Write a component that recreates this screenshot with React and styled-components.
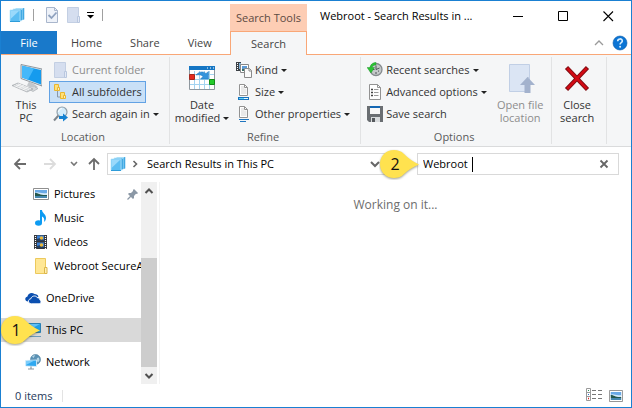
import React, { useState } from "react";
import styled, { createGlobalStyle } from "styled-components";

const GlobalStyle = createGlobalStyle`
  * {
    box-sizing: border-box;
  }
  body {
    margin: 0;
    background: #fff;
    color: #000;
    font-family: "Open Sans", "Noto Sans", sans-serif;
    font-size: 11px;
    line-height: 16px;
  }
  button,
  input {
    font: inherit;
    color: inherit;
    background: none;
    border: none;
    padding: 0;
    margin: 0;
  }
  svg {
    display: block;
    flex: none;
  }
`;

const Window = styled.div`
  display: flex;
  flex-direction: column;
  min-height: 100vh;
  border: 1px solid #1a80d2;
`;

/* title bar and tabs */
const Header = styled.header`
  display: grid;
  grid-template-columns: 229px 77px 1fr;
  grid-template-rows: 30px 24px;
`;
const QuickAccess = styled.div`
  display: flex;
  align-items: center;
  gap: 8px;
  padding: 0 0 2px 8px;
`;
const IconButton = styled.button`
  display: flex;
  align-items: center;
  justify-content: center;
  height: 100%;
  width: ${(props) => props.$width}px;
`;
const Separator = styled.span`
  width: 1px;
  height: 12px;
  background: ${(props) => props.$color || "#a0a0a0"};
`;
const ToolsLabel = styled.div`
  display: flex;
  align-items: center;
  justify-content: center;
  margin-top: 3px;
  background: #fdcdb4;
  color: #5c4a42;
`;
const TitleArea = styled.div`
  display: flex;
  min-width: 0;
`;
const Title = styled.h1`
  flex: 1;
  min-width: 0;
  margin: 0;
  padding: 0 0 0 13px;
  font-size: 11px;
  font-weight: 400;
  line-height: 30px;
  white-space: nowrap;
`;
const TabRow = styled.nav`
  display: flex;
  border-bottom: 1px solid #f9a777;
`;
const Tab = styled.button`
  padding: 0 14px;
  color: #444;
`;
const FileTab = styled(Tab)`
  width: 56px;
  background: #1979ca;
  color: #fff;
`;
const ActiveTab = styled(Tab)`
  border: 1px solid #f9a777;
  border-bottom: none;
  background: #f5f6f7;
`;
const TabEnd = styled.div`
  display: flex;
  justify-content: flex-end;
  border-bottom: 1px solid #f9a777;
  padding-right: 3px;
`;

/* ribbon */
const Ribbon = styled.div`
  display: flex;
  padding: 2px 0;
  background: #f5f6f7;
  border-bottom: 1px solid #dadbdc;
`;
const Group = styled.section`
  display: flex;
  flex-direction: column;
  min-width: ${(props) => props.$width}px;
  padding: 2px 6px 0 2px;
  border-right: 1px solid #e2e3e4;
`;
const GroupBody = styled.div`
  display: flex;
  height: 66px;
`;
const GroupLabel = styled.h2`
  margin: 5px 0 0;
  font-size: 11px;
  font-weight: 400;
  line-height: 14px;
  min-height: 14px;
  text-align: center;
  color: #5a5a5a;
`;
const BigButton = styled.button`
  display: flex;
  flex-direction: column;
  align-items: center;
  gap: 3px;
  width: ${(props) => props.$width}px;
  padding-top: 4px;
  line-height: 13px;
  white-space: nowrap;
  color: ${(props) => (props.disabled ? "#8d8d8d" : "#333")};
`;
const Column = styled.div`
  display: flex;
  flex: 1;
  flex-direction: column;
  align-items: flex-start;
`;
const SmallButton = styled.button`
  display: flex;
  align-items: center;
  gap: 3px;
  height: 22px;
  padding: 0 3px;
  white-space: nowrap;
  border: 1px solid ${(props) => (props.$active ? "#62a2e4" : "transparent")};
  background: ${(props) => (props.$active ? "#c9e0f7" : "none")};
  color: ${(props) => (props.disabled ? "#8d8d8d" : "#333")};
`;
const Caret = styled.span`
  display: inline-block;
  flex: none;
  margin-left: ${(props) => (props.$inline ? 3 : 0)}px;
  vertical-align: 2px;
  border: 3px solid transparent;
  border-top-color: #222;
  border-bottom: none;
`;

/* address bar */
const NavBar = styled.div`
  display: flex;
  align-items: center;
  padding: 6px 12px 7px 4px;
`;
const AddressBox = styled.div`
  display: flex;
  align-items: center;
  flex: 281 1 281px;
  height: 22px;
  margin: 0 29px 0 2px;
  padding: 0 4px 0 2px;
  border: 1px solid #d9d9d9;
`;
const Crumb = styled.button`
  flex: 1;
  padding-left: 4px;
  text-align: left;
  white-space: nowrap;
`;
const SearchBox = styled.div`
  position: relative;
  display: flex;
  align-items: center;
  flex: 202 1 202px;
  height: 22px;
  padding: 0 6px 0 5px;
  border: 1px solid #d9d9d9;
`;
const SearchInput = styled.input`
  field-sizing: content;
  min-width: 4px;
  outline: none;
  caret-color: transparent;
`;
const TextCursor = styled.span`
  width: 1px;
  height: 15px;
  margin: 0 auto 0 1px;
  background: #000;
`;

/* body */
const Body = styled.div`
  display: flex;
  flex: 1;
`;
const Tree = styled.ul`
  flex: none;
  width: 140px;
  margin: 0;
  padding: 0;
  list-style: none;
`;
const TreeItem = styled.li`
  position: relative;
  margin-top: ${(props) => (props.$root ? 8 : 0)}px;
  background: ${(props) => (props.$selected ? "#d9d9d9" : "none")};
`;
const TreeLink = styled.a`
  display: flex;
  align-items: center;
  gap: 5px;
  height: 24px;
  padding: 0 2px 0 ${(props) => (props.$root ? 24 : 32)}px;
  overflow: hidden;
  white-space: nowrap;
  color: #000;
  text-decoration: none;

  svg:last-child:not(:first-child) {
    margin-left: auto;
  }
`;
const Scrollbar = styled.div`
  display: flex;
  flex-direction: column;
  width: 16px;
  background: #f0f0f0;
`;
const ScrollArrow = styled.button`
  display: flex;
  align-items: center;
  justify-content: center;
  height: 17px;
`;
const Track = styled.div`
  display: flex;
  flex: 1;
  flex-direction: column;
  justify-content: flex-end;
`;
const Thumb = styled.div`
  height: 65%;
  background: #cdcdcd;
`;
const Results = styled.main`
  flex: 1;
  margin-left: 2px;
  padding-top: 15px;
  border-left: 1px solid #f3f3f3;
  text-align: center;
  font-size: 12px;
  color: #6d6d6d;
`;

const StatusBar = styled.footer`
  display: flex;
  align-items: center;
  height: 23px;
  padding: 0 7px 0 14px;
  color: #1e395b;
`;
const Count = styled.span`
  margin-right: 10px;
`;
const ViewButtons = styled.div`
  display: flex;
  gap: 6px;
  margin-left: auto;
`;

/* numbered pins over the window */
const Pin = styled.div`
  position: absolute;
  left: ${(props) => props.$left}px;
  top: 50%;
  width: 42px;
  height: 32px;
  margin-top: -16px;
  z-index: 1;

  svg {
    position: absolute;
    inset: 0;
  }
  span {
    position: relative;
    display: block;
    width: 32px;
    line-height: 32px;
    text-align: center;
    font-size: 16px;
    color: #111;
  }
`;

const Callout = ({ n, left }) => (
  <Pin $left={left}>
    <svg width="42" height="32" viewBox="0 0 42 32">
      <path
        d="M15 2C7 2 1 8 1 16s6 14 14 14c4 0 7-1 10-4 4-4 9-7 15-9.500C34 14 29 10 25 6c-3-3-6-4-10-4z"
        fill="#ffe24f"
        style={{ filter: "drop-shadow(0 1px 1px rgba(60,60,30,0.5))" }}
      />
    </svg>
    <span>{n}</span>
  </Pin>
);

const SearchFolderIcon = () => (
  <svg width="16" height="16" viewBox="0 0 16 16">
    <path d="M7 1l8 0v11.500l-2 .5H7z" fill="#56b6ea" />
    <path d="M6.500 1.500h8" stroke="#a5dcf8" />
    <path d="M4 2h9v11.500l-2 .5H4z" fill="#56b6ea" stroke="#b9e5fb" strokeWidth=".7" />
    <path d="M1 3h10v11.500H1z" fill="#5cbdf2" stroke="#b9e5fb" strokeWidth=".7" />
    <path d="M1.500 3.500h9L1.500 12z" fill="#9ad9fb" />
    <path d="M1 14.500h10" stroke="#2e9cd9" />
    <path d="M14.800 1v11.500M12.600 3v10" stroke="#2f9ddb" strokeWidth=".8" />
  </svg>
);
const CheckPageIcon = () => (
  <svg width="14" height="16" viewBox="0 0 14 16">
    <path d="M1.500.5h8l3 3v12h-11z" fill="#eef2f9" stroke="#a9b6cc" />
    <path d="M9.500.5v3h3" fill="none" stroke="#a9b6cc" />
    <path d="M3.500 8l3 3 5-5.500" fill="none" stroke="#8fa2bf" strokeWidth="1.800" />
  </svg>
);
const PaleFolderIcon = () => (
  <svg width="16" height="16" viewBox="0 0 16 16">
    <path d="M1.500.5h11v15h-11z" fill="#d5deef" stroke="#c3cfe3" />
    <path d="M11.500 9.500h2v6h-2z" fill="#e3e9f5" stroke="#b9c7df" />
  </svg>
);
const FolderIcon = () => (
  <svg width="16" height="16" viewBox="0 0 16 16">
    <path d="M2.500.5h10v15h-10z" fill="#ffe795" stroke="#ecc95c" />
    <path d="M11.500 9.500h2.500v6h-2.500z" fill="#ffefb5" stroke="#dcb64a" />
  </svg>
);
const BarCaretIcon = () => (
  <svg width="7" height="7" viewBox="0 0 7 7">
    <path d="M0 .5h7" stroke="#000" />
    <path d="M0 3h7L3.500 6.500z" />
  </svg>
);
const Chevron = ({ d, color = "#666", size = 10, weight = 1.6 }) => (
  <svg width={size} height={size} viewBox="0 0 10 10">
    <path d={d} fill="none" stroke={color} strokeWidth={weight} />
  </svg>
);
const HelpIcon = () => (
  <svg width="16" height="16" viewBox="0 0 16 16">
    <circle cx="8" cy="8" r="7" fill="#0b74d4" stroke="#0a5aa8" strokeWidth=".6" />
    <path d="M5.700 6.200c0-3 4.600-3 4.600-.2 0 1.600-2.200 1.600-2.200 3.400" fill="none" stroke="#d9efff" strokeWidth="1.600" />
    <circle cx="8.100" cy="11.700" r="1" fill="#d9efff" />
  </svg>
);
const ComputerIcon = () => (
  <svg width="32" height="32" viewBox="0 0 32 32">
    <path d="M11 1.500L32 6v17L11 15.500z" fill="#e5ebef" stroke="#777f86" strokeWidth=".8" />
    <path d="M12 2.800L31 7v14.500L12 14.500z" fill="#159bee" />
    <path d="M12 2.800L24 5.400 18 16.700 12 14.500z" fill="#45b8fa" />
    <path d="M19 18.500l-2 4 6 3.500 5-2-4-3z" fill="#c3c7cb" />
    <path d="M15 24l8 4.500 5-3-3-1.500" fill="#d5d8da" stroke="#a0a5a9" strokeWidth=".6" />
    <path d="M2 22.500l6-2.500 15 6-6 3z" fill="#d0d4d7" stroke="#a3a8ac" strokeWidth=".7" />
    <path d="M4 22.600l13 5.200M6 21.500l13 5.200M8 20.800l13 5M6 23.500l5-2.500M9 25l5-2.500M13 26.500l5-2.500" stroke="#fafafa" strokeWidth=".7" />
  </svg>
);
const SubfoldersIcon = () => (
  <svg width="16" height="16" viewBox="0 0 16 16">
    <path d="M4.500 6v7H9" fill="none" stroke="#8b98a5" />
    <path d="M1.500.500h4v6h-4z" fill="#ffe07a" stroke="#e9b62f" />
    <path d="M4.500 3.500h2v3h-2z" fill="#fff0b8" stroke="#e9b62f" />
    <path d="M7.500 8.500h4v6h-4z" fill="#ffe07a" stroke="#e9b62f" />
    <path d="M10.500 11.500h2v3h-2z" fill="#fff0b8" stroke="#e9b62f" />
  </svg>
);
const SearchAgainIcon = () => (
  <svg width="16" height="16" viewBox="0 0 16 16">
    <path d="M5.500 9.500L1 14.500" stroke="#7d858c" strokeWidth="2" />
    <circle cx="9" cy="6" r="5" fill="#d3ecfb" stroke="#92a0aa" strokeWidth="1.200" />
    <path d="M5.500 6a3.500 3.500 0 0 1 3.500-3.500" stroke="#fff" fill="none" />
    <path d="M6 10h4V7.500l5 4-5 4V13H6z" fill="#1482d2" />
  </svg>
);
const CalendarIcon = () => (
  <svg width="32" height="32" viewBox="0 0 32 32">
    <path d="M3.500 4.500h25v22h-25z" fill="#fff" stroke="#8e979e" />
    <path d="M8.500 8v18M13.500 8v18M18.500 8v18M23.500 8v18M4 11.500h24M4 16.500h24M4 21.500h24" stroke="#a3d3f0" />
    <path d="M3 3h26v4H3z" fill="#1576c4" />
    <path d="M21 5h1M24 5h1M27 5h1" stroke="#fff" />
    <path d="M3.500 11.500h5v5h-5z" fill="#e62b22" stroke="#a32a20" />
    <path d="M23.500 16.500h5v5h-5z" fill="#25cc2c" stroke="#138a1a" />
    <path d="M10 12c3-3.500 7-4 10-1.500l2.500-2v7.500h-8l2.500-2.500c-2-2-4-2-7-1.500z" fill="#3394dc" stroke="#1e74ba" strokeWidth=".5" />
  </svg>
);
const KindIcon = () => (
  <svg width="16" height="16" viewBox="0 0 16 16">
    <path d="M0 0h5v9H0z" fill="#3b4046" />
    <path d="M1 1.500h1M1 3.500h1M1 5.500h1M1 7.500h1" stroke="#fff" />
    <path d="M3 1h2v6H3z" fill="#7fb1d8" />
    <path d="M4.500 2.500h8v8h-8z" fill="#fff" stroke="#888" />
    <path d="M6 4h5v4H6z" fill="#5d9bd6" />
    <path d="M6 7h5v2H6z" fill="#3b6d64" />
    <path d="M8.500 6.500h5l2 2v7h-7z" fill="#fafafa" stroke="#8a8a8a" />
    <path d="M13 6.500V9h2.500" fill="none" stroke="#8a8a8a" />
  </svg>
);
const PageIcon = ({ children }) => (
  <svg width="16" height="16" viewBox="0 0 16 16">
    <path d="M3.500.5h5l3 3v8h-8z" fill="#fff" stroke="#929292" />
    <path d="M5 2h3v2.500h2.500V10H5z" fill="#e9e9e9" />
    <path d="M8.500.5v3h3" fill="none" stroke="#929292" />
    {children}
  </svg>
);
const RecentIcon = () => (
  <svg width="16" height="16" viewBox="0 0 16 16">
    <circle cx="9" cy="7.500" r="6" fill="#c4c8c9" stroke="#858b8e" strokeWidth="1.300" />
    <path d="M9 3.500v4l3.500-1.500M9 10v2M5.500 7.500h2M12 9.500l-1-.8" fill="none" stroke="#4d5356" />
    <path d="M9 .5C5 .5 3.500 3 3 5.500H0L4 11l3.500-5.500H5C5.500 4 6.500 3 9 3z" fill="#2cc234" stroke="#199023" strokeWidth=".4" />
  </svg>
);
const AdvancedIcon = () => (
  <svg width="16" height="16" viewBox="0 0 16 16">
    <path d="M2.500.5h8l3 3v12h-11z" fill="#fff" stroke="#929292" />
    <path d="M10.500.5v3h3" fill="none" stroke="#929292" />
    <path d="M4 5.500h2M4 8.500h2M4 11.500h2" stroke="#444" strokeWidth="1.600" />
    <path d="M7 5.500h4.500M7 8.500h4.500M7 11.500h4.500" stroke="#9a9a9a" />
  </svg>
);
const SaveIcon = () => (
  <svg width="16" height="16" viewBox="0 0 16 16">
    <path d="M0 0h16v16H2l-2-2z" fill="#6a6e72" />
    <path d="M3 0h10v8H3z" fill="#f7f7f7" />
    <path d="M3 0h10v2H3z" fill="#1467b3" />
    <path d="M4 11h9v5H4z" fill="#d8dbdd" />
    <path d="M5 12h3v4H5z" fill="#55595d" />
  </svg>
);
const OpenLocationIcon = () => (
  <svg width="32" height="32" viewBox="0 0 32 32">
    <path d="M5.500 1.500h20v27h-20z" fill="#dbe5f4" stroke="#c1cfe5" />
    <path d="M23.500 14.500h2v14h-2z" fill="#e8eef8" stroke="#c1cfe5" />
    <path d="M23.500 14l7.500 8h-4.500v8h-6v-8H16z" fill="#a3b2cd" />
  </svg>
);
const CloseSearchIcon = () => (
  <svg width="32" height="32" viewBox="0 0 32 32">
    <path d="M5.500 4.500l21 22M26.500 4.500l-21 22" stroke="#7d0d12" strokeWidth="4.400" />
    <path d="M6.200 5.200l19.600 20.600M25.800 5.200L6.200 25.800" stroke="#d20a14" strokeWidth="2.600" />
  </svg>
);
const Arrow = ({ d, color = "#6b6b6b" }) => (
  <svg width="14" height="14" viewBox="0 0 14 14">
    <path d={d} fill="none" stroke={color} strokeWidth="1.800" />
  </svg>
);
const PictureIcon = ({ size = 16 }) => (
  <svg width={size} height="16" viewBox="0 0 16 16" preserveAspectRatio="none">
    <path d="M.5 2.500h15v11H.5z" fill="#fff" stroke="#8f8f8f" />
    <path d="M2 4h12v4H2z" fill="#69a9e6" />
    <path d="M2 7c3-2 5 1 12 0v2H2z" fill="#d3e8f7" />
    <path d="M2 7c4 0 5 2.500 12 2v1H2z" fill="#23574d" />
    <path d="M2 10h12v2H2z" fill="#4687ae" />
  </svg>
);
const PushPinIcon = () => (
  <svg width="12" height="12" viewBox="0 0 12 12">
    <path d="M7 1l4 4-1 1-1-.3L7 8v2L6 11 1 6l1-1h2l2-2L6 2z" fill="#8b98a6" />
    <path d="M4 8l-3.500 3.500" stroke="#8b98a6" strokeWidth="1.300" />
  </svg>
);
const MusicIcon = () => (
  <svg width="16" height="16" viewBox="0 0 16 16">
    <path d="M7 0h2c0 3 4 4 4 8 0 2-1 3-2 4 1-4-1-5-2-5.500V13H7z" fill="#0d9bf2" />
    <ellipse cx="5.500" cy="13" rx="3.500" ry="2.700" fill="#0d9bf2" />
  </svg>
);
const VideoIcon = () => (
  <svg width="16" height="16" viewBox="0 0 16 16">
    <path d="M1 1h13v14H1z" fill="#33363b" />
    <path d="M2.500 2v13M12.500 2v13" stroke="#fff" strokeWidth="1.200" strokeDasharray="1 1" />
    <path d="M4 1.500h7V7H4zM4 8.500h7V14H4z" fill="#3b80d8" />
    <path d="M4 5l3-1 4 2v1H4zM4 12l3-1 4 2v1H4z" fill="#233f62" />
    <circle cx="8.500" cy="4" r="1.800" fill="#e9b73a" />
    <circle cx="8.500" cy="11" r="1.800" fill="#e9b73a" />
  </svg>
);
const OneDriveIcon = () => (
  <svg width="16" height="16" viewBox="0 0 16 16">
    <path d="M3 11.500c-3 0-4-4-.5-5C3 3 7 2 9.500 4c2 0 3.500 1 4 2.500z" fill="#0b4fb0" />
    <path d="M6.500 13.800c-4 0-4-4.700-.7-5 .7-3 5-4 6.700-1 2 0 2.500 1.500 2.300 2.200 2 1 1.200 3.800-.8 3.800z" fill="#0b4fb0" stroke="#fff" strokeWidth=".9" />
  </svg>
);
const MonitorIcon = () => (
  <svg width="16" height="16" viewBox="0 0 16 16">
    <path d="M1.500 1.500h14v9h-14z" fill="#1f9fe8" stroke="#2b80b4" />
    <path d="M2 2h13L2 9z" fill="#5fc0f7" />
    <path d="M3 14.500h13" stroke="#6e9bb8" />
  </svg>
);
const NetworkIcon = () => (
  <svg width="16" height="16" viewBox="0 0 16 16">
    <circle cx="10.500" cy="5.500" r="5" fill="#5b92b5" stroke="#4c7f9f" strokeWidth=".6" />
    <path d="M7 2.500c2-1.500 3-1.500 3-1L8.500 4zM12 4l2-.5.500 3-1.500 2-1.500-2z" fill="#b5d6e6" />
    <path d="M.5 6.500l11-.5v6.500L.5 12z" fill="#2fa8f0" stroke="#dff1fb" strokeWidth=".8" />
    <path d="M1 7l8-.3L1 11z" fill="#7bcdfb" />
    <path d="M6 12.500v2M3 15h6" stroke="#8796a0" strokeWidth="1.200" />
  </svg>
);
const DetailsIcon = () => (
  <svg width="16" height="14" viewBox="0 0 16 14">
    <path d="M.5.5h4v12h-4zM.5 4.500h4M.5 8.500h4" fill="#fff" stroke="#9a9a9a" />
    <path d="M2 2.500h1" stroke="#2a8f5a" />
    <path d="M2 6.500h1" stroke="#2a6fd0" />
    <path d="M2 10.500h1" stroke="#e02020" strokeWidth="1.500" />
    <path d="M6 2.500h4M6 6.500h4M6 10.500h4M12 2.500h4M12 6.500h4M12 10.500h4" stroke="#777" />
  </svg>
);

const tree = [
  { name: "Pictures", icon: <PictureIcon />, pinned: true },
  { name: "Music", icon: <MusicIcon /> },
  { name: "Videos", icon: <VideoIcon /> },
  { name: "Webroot SecureAnywhere", icon: <FolderIcon /> },
  { name: "OneDrive", icon: <OneDriveIcon />, root: true },
  { name: "This PC", icon: <MonitorIcon />, root: true, selected: true, pin: 1 },
  { name: "Network", icon: <NetworkIcon />, root: true },
];

const App = () => {
  const [query, setQuery] = useState("Webroot ");

  return (
    <>
      <GlobalStyle />
      <Window>
        <Header>
          <QuickAccess>
            <SearchFolderIcon />
            <Separator />
            <IconButton aria-label="Properties" $width={20}>
              <CheckPageIcon />
            </IconButton>
            <IconButton aria-label="New folder" $width={8}>
              <PaleFolderIcon />
            </IconButton>
            <IconButton aria-label="Customize" $width={8}>
              <BarCaretIcon />
            </IconButton>
            <Separator />
          </QuickAccess>
          <ToolsLabel>Search Tools</ToolsLabel>
          <TitleArea>
            <Title>Webroot - Search Results in ...</Title>
            <IconButton aria-label="Minimize" $width={45}>
              <svg width="11" height="11" viewBox="0 0 11 11">
                <path d="M0 5.500h10" stroke="#000" />
              </svg>
            </IconButton>
            <IconButton aria-label="Maximize" $width={45}>
              <svg width="11" height="11" viewBox="0 0 11 11">
                <path d="M.5.5h9v9h-9z" fill="none" stroke="#000" />
              </svg>
            </IconButton>
            <IconButton aria-label="Close" $width={45}>
              <svg width="11" height="11" viewBox="0 0 11 11">
                <path d="M.5.5l9.500 9.500M10 .5L.5 10" stroke="#000" strokeWidth="1.100" />
              </svg>
            </IconButton>
          </TitleArea>
          <TabRow>
            <FileTab>File</FileTab>
            <Tab>Home</Tab>
            <Tab>Share</Tab>
            <Tab>View</Tab>
          </TabRow>
          <ActiveTab>Search</ActiveTab>
          <TabEnd>
            <IconButton aria-label="Collapse ribbon" $width={26}>
              <Chevron d="M1 7l4-4 4 4" color="#9a9a9a" weight={1.3} />
            </IconButton>
            <IconButton aria-label="Help" $width={16}>
              <HelpIcon />
            </IconButton>
          </TabEnd>
        </Header>

        <Ribbon>
          <Group $width={169}>
            <GroupBody>
              <BigButton $width={46}>
                <ComputerIcon />
                <span>
                  This
                  <br />
                  PC
                </span>
              </BigButton>
              <Column>
                <SmallButton disabled>
                  <PaleFolderIcon />
                  Current folder
                </SmallButton>
                <SmallButton $active>
                  <SubfoldersIcon />
                  All subfolders
                </SmallButton>
                <SmallButton>
                  <SearchAgainIcon />
                  Search again in
                  <Caret />
                </SmallButton>
              </Column>
            </GroupBody>
            <GroupLabel>Location</GroupLabel>
          </Group>
          <Group $width={191}>
            <GroupBody>
              <BigButton $width={60}>
                <CalendarIcon />
                <span>
                  Date
                  <br />
                  modified
                  <Caret $inline />
                </span>
              </BigButton>
              <Column>
                <SmallButton>
                  <KindIcon />
                  Kind
                  <Caret />
                </SmallButton>
                <SmallButton>
                  <PageIcon>
                    <path d="M2 13h11v3H2z" fill="#1673bf" />
                    <path d="M3 14h5v1H3z" fill="#5fd3f5" />
                    <path d="M8 14h4v1H8z" fill="#e9f6fc" />
                  </PageIcon>
                  Size
                  <Caret />
                </SmallButton>
                <SmallButton>
                  <PageIcon>
                    <path d="M3 13.500h10M4 15.500h6" stroke="#1f76c0" />
                  </PageIcon>
                  Other properties
                  <Caret />
                </SmallButton>
              </Column>
            </GroupBody>
            <GroupLabel>Refine</GroupLabel>
          </Group>
          <Group $width={191}>
            <GroupBody>
              <Column>
                <SmallButton>
                  <RecentIcon />
                  Recent searches
                  <Caret />
                </SmallButton>
                <SmallButton>
                  <AdvancedIcon />
                  Advanced options
                  <Caret />
                </SmallButton>
                <SmallButton>
                  <SaveIcon />
                  Save search
                </SmallButton>
              </Column>
              <BigButton $width={50} disabled>
                <OpenLocationIcon />
                <span>
                  Open file
                  <br />
                  location
                </span>
              </BigButton>
            </GroupBody>
            <GroupLabel>Options</GroupLabel>
          </Group>
          <Group $width={53}>
            <GroupBody>
              <BigButton $width={46}>
                <CloseSearchIcon />
                <span>
                  Close
                  <br />
                  search
                </span>
              </BigButton>
            </GroupBody>
            <GroupLabel />
          </Group>
        </Ribbon>

        <NavBar>
          <IconButton aria-label="Back" $width={30}>
            <Arrow d="M13 7H2M7 2L2 7l5 5" />
          </IconButton>
          <IconButton aria-label="Forward" $width={30}>
            <Arrow d="M1 7h11M7 2l5 5-5 5" color="#dcdcdc" />
          </IconButton>
          <IconButton aria-label="Recent locations" $width={18}>
            <Chevron d="M2 3l3 3 3-3" color="#777" />
          </IconButton>
          <IconButton aria-label="Up" $width={22}>
            <Arrow d="M7 13V2M2 7l5-5 5 5" />
          </IconButton>
          <AddressBox>
            <SearchFolderIcon />
            <IconButton aria-label="Expand path" $width={17}>
              <Chevron d="M3.500 2l3 3-3 3" />
            </IconButton>
            <Crumb>Search Results in This PC</Crumb>
            <IconButton aria-label="Previous locations" $width={16}>
              <Chevron d="M1 3l4 4 4-4" weight={2} />
            </IconButton>
          </AddressBox>
          <SearchBox>
            <Callout n={2} left={-39} />
            <SearchInput
              aria-label="Search"
              value={query}
              onChange={(e) => setQuery(e.target.value)}
            />
            <TextCursor />
            <IconButton aria-label="Clear search" $width={16} onClick={() => setQuery("")}>
              <Chevron d="M1.500 1.500l7 7M8.500 1.500l-7 7" color="#666" weight={1.8} />
            </IconButton>
          </SearchBox>
        </NavBar>

        <Body>
          <Tree>
            {tree.map((item) => (
              <TreeItem key={item.name} $root={item.root} $selected={item.selected}>
                {item.pin && <Callout n={item.pin} left={-1} />}
                <TreeLink href="#" $root={item.root}>
                  {item.icon}
                  {item.name}
                  {item.pinned && <PushPinIcon />}
                </TreeLink>
              </TreeItem>
            ))}
          </Tree>
          <Scrollbar>
            <ScrollArrow aria-label="Scroll up">
              <Chevron d="M1.500 7L5 3.500 8.500 7" color="#505050" weight={2} />
            </ScrollArrow>
            <Track>
              <Thumb />
            </Track>
            <ScrollArrow aria-label="Scroll down">
              <Chevron d="M1.500 3L5 6.500 8.500 3" color="#505050" weight={2} />
            </ScrollArrow>
          </Scrollbar>
          <Results>Working on it...</Results>
        </Body>

        <StatusBar>
          <Count>0 items</Count>
          <Separator $color="#e3e3e3" />
          <ViewButtons>
            <IconButton aria-label="Details view" $width={16}>
              <DetailsIcon />
            </IconButton>
            <IconButton aria-label="Large icons view" $width={16}>
              <PictureIcon size={14} />
            </IconButton>
          </ViewButtons>
        </StatusBar>
      </Window>
    </>
  );
};

export default App;
